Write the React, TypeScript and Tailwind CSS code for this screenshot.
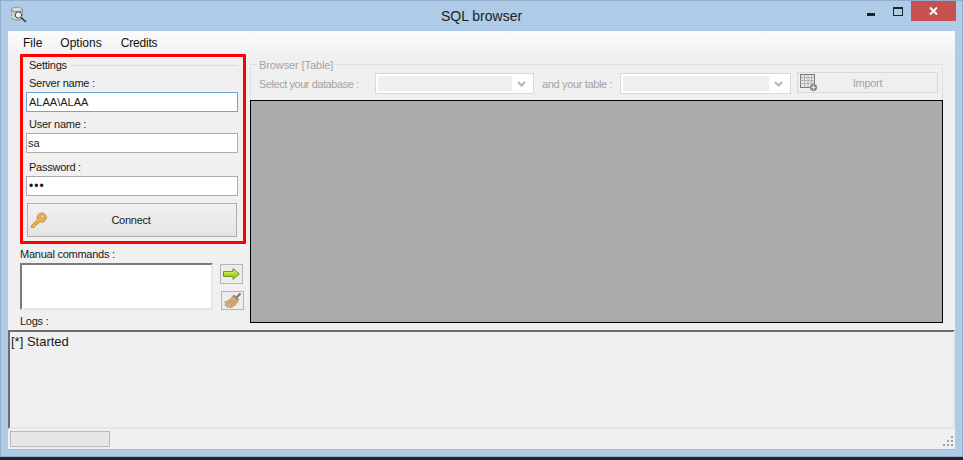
import React from "react";

const font = { fontFamily: '"Liberation Sans", Arial, sans-serif' };

function DbIcon() {
  return (
    <svg width="18" height="18" viewBox="0 0 18 18">
      <ellipse cx="7" cy="3.5" rx="5.5" ry="2.2" fill="#d8dcdc" stroke="#7b8686" strokeWidth="0.7" />
      <path d="M1.5 3.5V12c0 1.3 2.5 2.3 5.5 2.3s5.5-1 5.5-2.3V3.5c0 1.3-2.5 2.2-5.5 2.2S1.5 4.8 1.5 3.5z" fill="#b8c2c0" stroke="#7b8686" strokeWidth="0.6" />
      <path d="M1.5 7c0 1.3 2.5 2.2 5.5 2.2s5.5-.9 5.5-2.2M1.5 10c0 1.3 2.5 2.2 5.5 2.2s5.5-.9 5.5-2.2" fill="none" stroke="#eef2f0" strokeWidth="1" />
      <circle cx="8.5" cy="9" r="3.2" fill="#eaf2f2" stroke="#444" strokeWidth="1" />
      <path d="M11 11.5l5 4.5" stroke="#333" strokeWidth="1.6" />
    </svg>
  );
}

function KeyIcon() {
  return (
    <svg width="18" height="18" viewBox="0 0 18 18">
      <path d="M1.5 14.5l6-6.2a4.6 4.6 0 1 1 2.6 2.5l-1.3 1.2h-1.6v1.5H5.6V15L4 16.5H1.5z" fill="#eeb04e" stroke="#b9843a" strokeWidth="0.8" strokeLinejoin="round" />
      <circle cx="12.2" cy="5.4" r="1.4" fill="#fbeccb" stroke="#b9843a" strokeWidth="0.6" />
    </svg>
  );
}

function ArrowIcon() {
  return (
    <svg width="17" height="12" viewBox="0 0 17 12">
      <path d="M0.5 3.6H10V0.7L16.3 6 10 11.3V8.4H0.5z" fill="#a6d81e" stroke="#5f8a12" strokeWidth="0.9" strokeLinejoin="round" />
      <path d="M1.5 4.8H11V3l3 2.4" fill="none" stroke="#d9f27c" strokeWidth="1" />
    </svg>
  );
}

function BroomIcon() {
  return (
    <svg width="18" height="17" viewBox="0 0 18 17">
      <path d="M12 6L16.5 1.5" stroke="#9a6a3a" strokeWidth="2" />
      <path d="M9 3.5L14 8.5C13 12 10 15 6 15.8L5 14.2 3.5 15.8 3 13.6 1 13.8 2 11.2 0.6 10.2C4 9.2 7 7 9 3.5z" fill="#d9ae72" stroke="#a07a48" strokeWidth="0.6" strokeLinejoin="round" />
      <path d="M9.6 3.4l4.8 4.8" stroke="#7d93a8" strokeWidth="2.2" />
      <path d="M4.5 11.5c1.8-.9 3.4-2.2 4.6-4M7 13.5c1.5-1 2.9-2.6 3.8-4.4" stroke="#a07a48" strokeWidth="0.7" fill="none" />
    </svg>
  );
}

function TableIcon() {
  return (
    <svg width="18" height="18" viewBox="0 0 18 18">
      <rect x="0.5" y="0.5" width="14" height="13" fill="#e6e6e6" stroke="#777" />
      <path d="M0.5 3.5h14M0.5 6.5h14M0.5 9.5h14M4.5 0.5v13M8 0.5v13M11.5 0.5v13" stroke="#aaa" strokeWidth="0.8" />
      <circle cx="13.5" cy="13.5" r="3.6" fill="#888" />
      <path d="M13.5 11.5v4M11.5 13.5h4" stroke="#eee" strokeWidth="1" />
    </svg>
  );
}

function Chevron() {
  return (
    <svg width="9" height="6" viewBox="0 0 9 6">
      <path d="M1 1l3.5 3.5L8 1" fill="none" stroke="#b5b5b5" strokeWidth="2" />
    </svg>
  );
}

function Combo({ w }: { w: string }) {
  return (
    <div className={`${w} h-[21px] border border-[#d9d9d9] bg-white flex items-center p-[2px] shrink-0`}>
      <div className="flex-1 h-full bg-[#efefef]" />
      <div className="w-[19px] flex justify-center"><Chevron /></div>
    </div>
  );
}

export default function App() {
  return (
    <div className="w-[963px] h-[460px] bg-[#252525] overflow-hidden text-[11px] leading-[16px] text-[#1a1a1a] tracking-[-0.25px]" style={font}>
      <div className="h-[457px] border border-[#93aecb] bg-[#aecbe8] flex flex-col">
        <div className="h-[30px] flex shrink-0">
          <div className="w-[120px] pl-[9px] pt-[5px]"><DbIcon /></div>
          <div className="flex-1 text-center text-[14px] leading-[30px] text-[#222] tracking-normal">SQL browser</div>
          <div className="w-[120px] flex justify-end pr-[6px]">
            <div className="w-[26px] pt-[12px] flex justify-start"><div className="w-[8px] h-[3px] bg-[#222]" /></div>
            <div className="w-[18px] pt-[6px]"><div className="w-[10px] h-[9px] border border-[#222] border-t-[2px]" /></div>
            <div className="w-[45px] h-[20px] bg-[#c75050] flex items-center justify-center">
              <svg width="9" height="8" viewBox="0 0 9 8"><path d="M1 0.5l7 7M8 0.5l-7 7" stroke="#fff" strokeWidth="2" /></svg>
            </div>
          </div>
        </div>

        <div className="mx-[7px] h-[419px] bg-[#f0f0f0] flex flex-col border-b border-[#9fb8d2] shrink-0">
          <div className="h-[23px] shrink-0 bg-gradient-to-b from-[#fbfbfb] to-[#f2f2f2] flex items-center pl-[15px] gap-[18px] text-[12px] text-[#111] tracking-normal">
            <span>File</span>
            <span>Options</span>
            <span className="ml-[1px] tracking-[-0.2px]">Credits</span>
          </div>

          <div className="h-[276px] flex shrink-0">
            <div className="w-[242px] shrink-0 pl-[12px]">
              <div className="w-[226px] h-[190px] border-[3px] border-[#ff0000] rounded-[1px] pl-[3px] pr-[5px] flex flex-col">
                <div className="flex items-center h-[14px] mt-[1px]">
                  <span className="pl-[3px] pr-[3px]">Settings</span>
                  <div className="flex-1 h-px bg-[#dcdcdc]" />
                </div>
                <div className="pl-[3px] mt-[3px] h-[16px]">Server name :</div>
                <div className="h-[20px] mt-[1px] border border-[#6aa5dc] bg-white pl-[2px] leading-[18px] tracking-normal">ALAA\ALAA</div>
                <div className="pl-[3px] mt-[4px] h-[16px]">User name :</div>
                <div className="h-[20px] mt-[1px] border border-[#ababab] bg-white pl-[1px] leading-[18px] tracking-normal">sa</div>
                <div className="pl-[3px] mt-[6px] h-[16px]">Password :</div>
                <div className="h-[20px] mt-[1px] border border-[#ababab] bg-white pl-[2px] text-[12px] leading-[18px] tracking-[1px]">•••</div>
                <div className="h-[34px] mt-[7px] mx-[1px] border border-[#adadad] bg-gradient-to-b from-[#f1f1f1] to-[#e4e4e4] flex items-center relative justify-center">
                  <div className="absolute left-[2px] top-[7px]"><KeyIcon /></div>
                  <span className="-ml-[2px] -mt-[1px]">Connect</span>
                </div>
              </div>
              <div className="mt-[1px] h-[16px] pt-[1px]">Manual commands :</div>
              <div className="flex mt-[2px]">
                <div className="w-[193px] h-[47px] bg-white border-2 border-t-[#7a7a7a] border-l-[#7a7a7a] border-r-[#e6e6e6] border-b-[#e6e6e6]" />
                <div className="ml-[7px]">
                  <div className="w-[23px] h-[20px] border border-[#b5b5b5] bg-[#ececec] flex items-center justify-center mt-[1px]"><ArrowIcon /></div>
                  <div className="w-[23px] h-[19px] ml-[1px] mt-[7px] border border-[#b5b5b5] bg-[#ececec] flex items-center justify-center"><BroomIcon /></div>
                </div>
              </div>
              <div className="mt-[3px]">Logs :</div>
            </div>

            <div className="w-[693px] shrink-0 flex flex-col text-[#a3a3a3]">
              <div className="h-[45px] flex flex-col border border-[#dfdfdf] border-b-0 mt-[10px] relative">
                <div className="absolute -top-[8px] left-[6px] bg-[#f0f0f0] px-[2px] whitespace-nowrap tracking-[-0.1px]">Browser [Table]</div>
                <div className="flex items-center pl-[8px] pt-[8px] whitespace-nowrap">
                  <span className="w-[116px] shrink-0 tracking-[-0.45px]">Select your database :</span>
                  <Combo w="w-[159px]" />
                  <span className="w-[86px] shrink-0 pl-[8px] tracking-[-0.35px]">and your table :</span>
                  <Combo w="w-[171px]" />
                  <div className="w-[141px] h-[21px] ml-[6px] -mt-[2px] border border-[#d9d9d9] bg-[#efefef] flex items-center justify-center relative shrink-0">
                    <div className="absolute left-[2px] top-[1px]"><TableIcon /></div>
                    <span>Import</span>
                  </div>
                </div>
              </div>
              <div className="h-[223px] border border-black bg-[#ababab] -mt-[9px] relative" />
            </div>
          </div>

          <div className="h-[99px] shrink-0 bg-[#f0f0f0] border-t-2 border-l-2 border-[#6d6d6d] border-r-2 border-r-[#e6e6e6] border-b-2 border-b-[#e6e6e6] text-[13px] leading-[20px] pl-[1px] tracking-normal">
            [*] Started
          </div>

          <div className="flex-1 flex items-start relative">
            <div className="w-[100px] h-[16px] ml-[2px] mt-[2px] border border-[#bcbcbc] bg-[#e6e6e6]" />
            <svg className="absolute right-[1px] bottom-[2px]" width="12" height="12" viewBox="0 0 12 12">
              <path d="M9 1h2v2H9zM5 5h2v2H5zM9 5h2v2H9zM1 9h2v2H1zM5 9h2v2H5zM9 9h2v2H9z" fill="#a0a0a0" />
            </svg>
          </div>
        </div>
      </div>
    </div>
  );
}
